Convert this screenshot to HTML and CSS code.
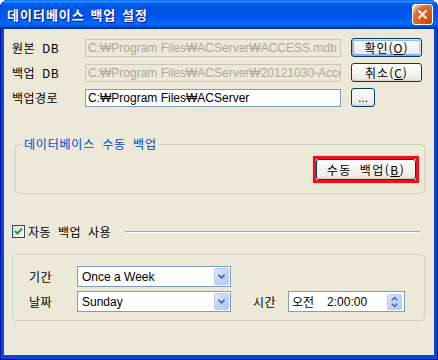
FILE: index.html
```html
<!DOCTYPE html>
<html lang="ko">
<head>
<meta charset="utf-8">
<title>데이터베이스 백업 설정</title>
<link rel="stylesheet" href="styles.css">
</head>
<body>
<div class="window">
  <div class="titlebar">
    <span class="title">데이터베이스 백업 설정</span>
    <span class="close"><svg width="11" height="11" viewBox="0 0 11 11"><path d="M1.5 1.5 L9.5 9.5 M9.5 1.5 L1.5 9.5" stroke="#fff" stroke-width="2"/></svg></span>
  </div>
  <div class="client">
    <div class="paths">
      <span class="label">원본 DB</span>
      <div class="edit disabled">C:₩Program Files₩ACServer₩ACCESS.mdb</div>
      <button class="btn default">확인(<u>O</u>)</button>
      <span class="label">백업 DB</span>
      <div class="edit disabled">C:₩Program Files₩ACServer₩20121030-Access.mdb</div>
      <button class="btn">취소(<u>C</u>)</button>
      <span class="label">백업경로</span>
      <div class="edit">C:₩Program Files₩ACServer</div>
      <button class="btn small">...</button>
    </div>

    <div class="group manual">
      <span class="legend">데이터베이스 수동 백업</span>
      <span class="ring"><button class="btn wide">수동 백업(<u>B</u>)</button></span>
    </div>

    <div class="auto-row">
      <span class="check"><svg width="9" height="9" viewBox="0 0 9 9"><path d="M1 4 L3.5 6.5 L8 1.5" fill="none" stroke="#21A121" stroke-width="2"/></svg></span>
      <span class="check-label">자동 백업 사용</span>
      <span class="etch"></span>
    </div>

    <div class="group schedule">
      <span class="label">기간</span>
      <div class="combo"><span class="combo-text">Once a Week</span><span class="drop"><svg width="7" height="5" viewBox="0 0 7 5"><path d="M0.5 0.8 L3.5 3.8 L6.5 0.8" fill="none" stroke="#4D6185" stroke-width="1.6"/></svg></span></div>
      <span class="filler"></span>
      <span class="label">날짜</span>
      <div class="combo"><span class="combo-text">Sunday</span><span class="drop"><svg width="7" height="5" viewBox="0 0 7 5"><path d="M0.5 0.8 L3.5 3.8 L6.5 0.8" fill="none" stroke="#4D6185" stroke-width="1.6"/></svg></span></div>
      <span class="spacer"></span>
      <span class="label">시간</span>
      <div class="timebox"><span class="ampm">오전</span><span class="clock">2:00:00</span><span class="spin"><svg width="7" height="12" viewBox="0 0 7 12"><path d="M0.8 4.2 L3.5 1.5 L6.2 4.2 M0.8 7.8 L3.5 10.5 L6.2 7.8" fill="none" stroke="#4D6185" stroke-width="1.5"/></svg></span></div>
    </div>
  </div>
</div>
</body>
</html>
```

FILE: styles.css
```css
* { box-sizing: border-box; }
html, body { margin: 0; padding: 0; }
body {
  width: 438px;
  height: 360px;
  overflow: hidden;
  background: #fff;
  font-family: "Liberation Sans", "Noto Sans CJK KR", sans-serif;
  font-size: 12px;
  color: #000;
}
.window {
  width: 438px;
  height: 360px;
  display: flex;
  flex-direction: column;
  background: #0A46DA;
  border-radius: 8px 8px 0 0;
  box-shadow: inset 1px 0 #0019A8, inset -1px 0 #00138C, inset 0 -1px #00138C;
}
.titlebar {
  height: 29px;
  flex: none;
  display: flex;
  align-items: center;
  justify-content: space-between;
  padding: 0 5px 0 7px;
  border-radius: 8px 8px 0 0;
  background: linear-gradient(to bottom, #0058EE 0%, #3A93FF 4%, #288EFF 6%, #127DFF 8%, #036FFC 10%, #0262EE 14%, #0057E5 20%, #0054E3 24%, #0055EB 56%, #005BF5 66%, #026AFE 76%, #0062EF 86%, #0052D6 92%, #0040AB 94%, #003092 100%);
}
.title {
  color: #fff;
  font-family: "Noto Sans CJK KR", sans-serif;
  font-weight: bold;
  font-size: 13px;
  text-shadow: 1px 1px #0F1089;
  letter-spacing: 1px;
  word-spacing: 1px;
}
.close {
  width: 21px;
  height: 21px;
  border: 1px solid #fff;
  border-radius: 3px;
  display: flex;
  align-items: center;
  justify-content: center;
  background: radial-gradient(circle at 90% 90%, #cc4600 0%, #dc6527 55%, #cd7546 70%, #ffccb2 90%, #fff 100%);
  margin-top: -1px;
}
.client {
  flex: 1;
  margin: 0 4px 5px 4px;
  background: #ECE9D8;
  padding: 9px 0 0 8px;
  display: flex;
  flex-direction: column;
}
.label {
  font-family: "Noto Sans CJK KR", sans-serif;
  word-spacing: 3px;
  letter-spacing: 0.5px;
  white-space: nowrap;
}
.paths {
  display: grid;
  grid-template-columns: 63px 256px 71px;
  grid-auto-rows: 19px;
  column-gap: 10px;
  row-gap: 6px;
  align-items: center;
}
.edit {
  height: 18px;
  align-self: end;
  border: 1px solid #7F9DB9;
  background: #fff;
  padding: 0 2px;
  line-height: 16px;
  white-space: nowrap;
  overflow: hidden;
}
.edit.disabled {
  background: #ECE9D8;
  border-color: #C9C7BA;
  color: #ACA899;
}
.btn {
  height: 19px;
  padding: 0;
  border: 1px solid #003C74;
  border-radius: 3px;
  background: linear-gradient(180deg, #fff, #ECEBE6 86%, #D6D0C5);
  font-family: "Noto Sans CJK KR", sans-serif;
  font-size: 12px;
  letter-spacing: 1px;
  word-spacing: 3px;
  color: #000;
  line-height: 16px;
}
.btn u { text-underline-offset: 1px; }
.btn.default {
  box-shadow: inset -1px 1px #cee7ff, inset 1px 2px #98b8ea, inset -2px 2px #bcd4f6, inset 1px -1px #89ade4, inset 2px -2px #89ade4;
}
.btn.small { width: 24px; font-family: "Liberation Sans", sans-serif; letter-spacing: 0; }
.group {
  border: 1px solid #D0D0BF;
  border-radius: 4px;
}
.manual {
  margin: 37px 9px 0 3px;
  padding: 0 5px 10px 0;
  display: flex;
  flex-direction: column;
}
.legend {
  align-self: flex-start;
  margin: -8px 0 0 6px;
  padding: 0 2px;
  line-height: 14px;
  background: #ECE9D8;
  color: #0046D5;
  font-family: "Noto Sans CJK KR", sans-serif;
  letter-spacing: 0.8px;
  word-spacing: 3px;
}
.ring {
  align-self: flex-end;
  margin-top: 5px;
  border: 3px solid #E8141C;
  display: flex;
  box-shadow: 0 0 1px #ff6a6a;
}
.btn.wide { width: 100px; height: 21px; letter-spacing: 1.5px; }
.auto-row {
  margin: 31px 14px 0 0;
  height: 13px;
  display: flex;
  align-items: center;
}
.check {
  width: 13px;
  height: 13px;
  flex: none;
  border: 1px solid #1C5180;
  background: linear-gradient(135deg, #DCDCD7, #fff);
  display: flex;
  align-items: center;
  justify-content: center;
}
.check-label {
  margin-left: 3px;
  font-family: "Noto Sans CJK KR", sans-serif;
  letter-spacing: 0.5px;
  word-spacing: 3px;
  white-space: nowrap;
}
.etch {
  flex: 1;
  margin-left: 14px;
  height: 2px;
  border-top: 1px solid #ACA899;
  border-bottom: 1px solid #fff;
}
.schedule {
  margin: 16px 9px 0 0;
  padding: 11px 0 8px 16px;
  display: grid;
  grid-template-columns: 48px 154px 22px 35px 117px;
  grid-template-rows: 21px 21px;
  row-gap: 4px;
  align-items: center;
}
.filler { grid-column: span 3; }
.combo, .timebox {
  height: 21px;
  border: 1px solid #7F9DB9;
  background: #fff;
  display: flex;
  align-items: center;
}
.combo-text {
  padding-left: 4px;
  flex: 1;
  white-space: nowrap;
}
.drop, .spin {
  flex: none;
  width: 15px;
  height: 17px;
  margin-right: 1px;
  border-radius: 2px;
  border: 1px solid #B9CCF7;
  background: linear-gradient(135deg, #E1EAFE 0%, #C6D6FB 45%, #B4C8F6 100%);
  display: flex;
  align-items: center;
  justify-content: center;
}
.timebox { padding-left: 3px; }
.ampm { font-family: "Noto Sans CJK KR", sans-serif; }
.clock { margin-left: 13px; flex: 1; }
.spin { height: 16px; margin-right: 2px; }
```
